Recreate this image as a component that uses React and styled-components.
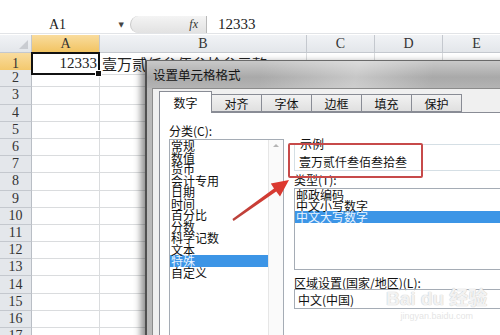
import React from 'react';
import styled, { createGlobalStyle } from 'styled-components';

const GlobalStyle = createGlobalStyle`
  html, body { margin: 0; padding: 0; background: #fff; }
`;

const CJK = `"Noto Sans CJK SC", "Liberation Sans", sans-serif`;
const SERIF = `"Liberation Serif", "DejaVu Serif", serif`;

const Screen = styled.div`
  position: relative;
  width: 500px;
  height: 335px;
  overflow: hidden;
  background: #fff;
  font-family: ${SERIF};
`;

const TopGap = styled.div`
  height: 16px;
`;

const FormulaBar = styled.div`
  display: flex;
  height: 17px;
  border-bottom: 1px solid #e2e4e7;
  font-size: 14px;
  color: #222;
`;

const NameBox = styled.div`
  width: 130px;
  display: flex;
  align-items: center;
  padding-left: 49px;
  box-sizing: border-box;
  span { flex: 1; }
  i {
    font-style: normal;
    font-family: "DejaVu Sans", sans-serif;
    font-size: 7px;
    color: #444;
    margin-right: 6px;
  }
`;

const FxZone = styled.div`
  width: 76px;
  display: flex;
  align-items: center;
  justify-content: flex-end;
  padding-right: 8px;
  box-sizing: border-box;
  border-radius: 9px 0 0 9px;
  border-left: 1px solid #c8c8c8;
  background: linear-gradient(#f4f4f4, #e2e2e2);
  font-style: italic;
  font-size: 12px;
  color: #333;
`;

const FormulaInput = styled.div`
  flex: 1;
  display: flex;
  align-items: center;
  padding-left: 11px;
  border-left: 1px solid #b9b9b9;
  font-size: 15px;
`;

const Grid = styled.div`
  margin-top: 1px;
`;

const COLS = '32px 68px 207px 68px 68px 68px';

const HeaderRow = styled.div`
  display: grid;
  grid-template-columns: ${COLS};
  height: 18px;
`;

const Row = styled.div`
  display: grid;
  grid-template-columns: ${COLS};
  height: 17.2px;
`;

const ColHead = styled.div`
  box-sizing: border-box;
  display: flex;
  align-items: center;
  justify-content: center;
  font-size: 14px;
  color: #333;
  border-right: 1px solid #c4c8ce;
  border-bottom: 1px solid ${p => (p.$active ? '#e3a43b' : '#c4c8ce')};
  background: ${p => (p.$active ? 'linear-gradient(#f9dc9e, #f2c462)' : 'linear-gradient(#f1f3f6, #e3e6ea)')};
  position: relative;
`;

const Corner = styled(ColHead)`
  &::after {
    content: '';
    position: absolute;
    right: 3px;
    bottom: 3px;
    border-left: 9px solid transparent;
    border-bottom: 9px solid #c9ccd1;
  }
`;

const RowHead = styled.div`
  box-sizing: border-box;
  display: flex;
  align-items: center;
  justify-content: center;
  font-size: 14px;
  color: #333;
  border-bottom: 1px solid #c4c8ce;
  border-right: 1px solid ${p => (p.$active ? '#e3a43b' : '#b9bec5')};
  background: ${p => (p.$active ? 'linear-gradient(#f9dc9e, #f2c462)' : '#e4e7eb')};
`;

const Cell = styled.div`
  box-sizing: border-box;
  border-right: 1px solid #dadcde;
  border-bottom: 1px solid #dadcde;
  display: flex;
  align-items: center;
  justify-content: ${p => (p.$right ? 'flex-end' : 'flex-start')};
  white-space: nowrap;
  overflow: visible;
  position: relative;
`;

const ActiveCell = styled(Cell)`
  border: 2px solid #111;
  margin: -1px 0 0 -1px;
  padding-right: 1px;
  font-size: 15px;
  color: #222;
  background: #fff;
  z-index: 1;
  &::after {
    content: '';
    position: absolute;
    right: -4px;
    bottom: -4px;
    width: 5px;
    height: 5px;
    background: #111;
    border: 1px solid #fff;
  }
`;

const Overflow = styled.span`
  font-family: ${CJK};
  font-size: 15px;
  color: #222;
  padding-left: 2px;
`;

const Dialog = styled.div`
  position: absolute;
  left: 145px;
  top: 60px;
  width: 380px;
  height: 290px;
  display: flex;
  flex-direction: column;
  border-left: 2px solid #505050;
  border-top: 1px solid #6a6a6a;
  background: linear-gradient(90deg, #b9b9b9, #d4d4d4 40%, #bfbfbf);
  box-shadow: -4px 2px 7px rgba(0, 0, 0, 0.45);
  font-family: ${CJK};
  font-size: 12px;
  color: #111;
  z-index: 2;
`;

const TitleBar = styled.div`
  height: 27px;
  display: flex;
  align-items: center;
  padding-left: 6px;
  font-size: 12.5px;
  color: #151515;
  background:
    linear-gradient(100deg, rgba(255,255,255,0) 30%, rgba(255,255,255,0.35) 55%, rgba(255,255,255,0) 75%),
    linear-gradient(#c9c9c9, #a9a9a9 60%, #b4b4b4);
`;

const Frame = styled.div`
  flex: 1;
  padding-left: 5px;
  display: flex;
`;

const Body = styled.div`
  flex: 1;
  background: #f0f0f0;
  border-left: 1px solid #8c8c8c;
  border-top: 1px solid #8c8c8c;
  padding: 1px 0 0 6px;
  display: flex;
  flex-direction: column;
`;

const Tabs = styled.div`
  display: flex;
  align-items: flex-end;
  height: 22px;
  position: relative;
  z-index: 1;
`;

const Tab = styled.div`
  box-sizing: border-box;
  width: ${p => p.$w}px;
  height: ${p => (p.$active ? 22 : 18)}px;
  margin-bottom: ${p => (p.$active ? -1 : 0)}px;
  display: flex;
  align-items: center;
  justify-content: center;
  border: 1px solid #898c95;
  border-bottom: ${p => (p.$active ? 'none' : '1px solid #898c95')};
  margin-right: -1px;
  background: ${p => (p.$active ? '#fff' : 'linear-gradient(#f2f2f2, #e0e0e0)')};
  font-size: 12px;
  padding-top: ${p => (p.$active ? 0 : 1)}px;
`;

const Panel = styled.div`
  flex: 1;
  background: #fff;
  border: 1px solid #898c95;
  border-right: none;
  display: grid;
  grid-template-columns: 115px 1fr;
  column-gap: 10px;
  padding: 12px 0 0 9px;
`;

const Column = styled.div`
  display: flex;
  flex-direction: column;
`;

const Label = styled.div`
  line-height: 12px;
  height: 12px;
  margin-top: ${p => p.$gap || 0}px;
  white-space: nowrap;
`;

const ListBox = styled.div`
  box-sizing: border-box;
  margin-top: ${p => p.$gap || 0}px;
  height: ${p => p.$h}px;
  border: 1px solid #a5acb5;
  display: flex;
  background: #fff;
  overflow: hidden;
`;

const Items = styled.div`
  flex: 1;
  padding-top: ${p => p.$pad || 0}px;
`;

const Item = styled.div`
  line-height: ${p => p.$lh}px;
  height: ${p => p.$lh}px;
  padding-left: 1px;
  white-space: nowrap;
  color: ${p => (p.$selected ? '#eaf4ff' : '#111')};
  background: ${p => (p.$selected ? '#3c95e6' : 'transparent')};
`;

const ScrollTrack = styled.div`
  width: 15px;
  border-left: 1px solid #e6e6e6;
  background: #fafafa;
  display: flex;
  justify-content: center;
  padding-top: 4px;
  box-sizing: border-box;
  &::before {
    content: '';
    width: 0;
    height: 0;
    border-left: 3px solid transparent;
    border-right: 3px solid transparent;
    border-bottom: 3px solid #b4b4b4;
  }
`;

const Sample = styled.fieldset`
  margin: 13px 0 0 0;
  padding: 0 0 0 4px;
  height: 33px;
  box-sizing: border-box;
  border: 1px solid #d5dfe5;
  border-right: none;
  min-width: 0;
  legend {
    padding: 0 1px;
    line-height: 12px;
    font-size: 12px;
  }
  div {
    line-height: 16px;
    padding-top: 4px;
  }
`;

const Combo = styled.div`
  box-sizing: border-box;
  height: 20px;
  border: 1px solid #a5acb5;
  display: flex;
  align-items: center;
  padding-left: 3px;
`;

const Callout = styled.div`
  position: absolute;
  left: 288px;
  top: 143px;
  width: 135px;
  height: 35px;
  box-sizing: border-box;
  border: 2px solid #c74a4a;
  border-radius: 2px;
  z-index: 3;
`;

const ArrowLayer = styled.svg`
  position: absolute;
  left: 0;
  top: 0;
  z-index: 4;
  pointer-events: none;
`;

const Watermark = styled.div`
  position: absolute;
  left: 386px;
  top: 288px;
  z-index: 3;
  display: flex;
  flex-direction: column;
  align-items: center;
  color: rgba(255, 255, 255, 0.8);
  text-shadow: 0 0 1px #c8c8c8, 0 0 1px #c8c8c8;
  pointer-events: none;
  b {
    font-family: "Liberation Sans", ${CJK};
    font-size: 19px;
    line-height: 22px;
  }
  small {
    font-family: "Liberation Sans", sans-serif;
    font-size: 9px;
    line-height: 12px;
    color: rgba(225, 225, 225, 0.9);
    text-shadow: none;
  }
`;

const categories = ['常规', '数值', '货币', '会计专用', '日期', '时间', '百分比', '分数', '科学记数', '文本', '特殊', '自定义'];
const types = ['邮政编码', '中文小写数字', '中文大写数字'];
const tabs = [['数字', 53], ['对齐', 51], ['字体', 51], ['边框', 51], ['填充', 51], ['保护', 51]];
const rows = Array.from({ length: 17 }, (_, i) => i + 1);

export default function App() {
  return (
    <Screen>
      <GlobalStyle />
      <TopGap />
      <FormulaBar>
        <NameBox><span>A1</span><i>▼</i></NameBox>
        <FxZone>fx</FxZone>
        <FormulaInput>12333</FormulaInput>
      </FormulaBar>
      <Grid>
        <HeaderRow>
          <Corner />
          <ColHead $active>A</ColHead>
          <ColHead>B</ColHead>
          <ColHead>C</ColHead>
          <ColHead>D</ColHead>
          <ColHead>E</ColHead>
        </HeaderRow>
        {rows.map(n => (
          <Row key={n}>
            <RowHead $active={n === 1}>{n}</RowHead>
            {n === 1 ? <ActiveCell $right>12333</ActiveCell> : <Cell />}
            <Cell>{n === 1 && <Overflow>壹万贰仟叁佰叁拾叁元整</Overflow>}</Cell>
            <Cell />
            <Cell />
            <Cell />
          </Row>
        ))}
      </Grid>

      <Dialog>
        <TitleBar>设置单元格格式</TitleBar>
        <Frame>
          <Body>
            <Tabs>
              {tabs.map(([t, w], i) => (
                <Tab key={t} $w={w} $active={i === 0}>{t}</Tab>
              ))}
            </Tabs>
            <Panel>
              <Column>
                <Label>分类(C):</Label>
                <ListBox $gap={2} $h={200}>
                  <Items>
                    {categories.map(c => (
                      <Item key={c} $lh={11.55} $selected={c === '特殊'}>{c}</Item>
                    ))}
                  </Items>
                  <ScrollTrack />
                </ListBox>
              </Column>
              <Column>
                <Sample>
                  <legend>示例</legend>
                  <div>壹万贰仟叁佰叁拾叁</div>
                </Sample>
                <Label $gap={3}>类型(T):</Label>
                <ListBox $gap={2} $h={82}>
                  <Items $pad={0}>
                    {types.map(t => (
                      <Item key={t} $lh={11.2} $selected={t === '中文大写数字'}>{t}</Item>
                    ))}
                  </Items>
                </ListBox>
                <Label $gap={7}>区域设置(国家/地区)(L):</Label>
                <Combo>中文(中国)</Combo>
              </Column>
            </Panel>
          </Body>
        </Frame>
      </Dialog>

      <Callout />
      <ArrowLayer width="500" height="335" viewBox="0 0 500 335">
        <defs>
          <linearGradient id="arw" x1="0" y1="1" x2="1" y2="0">
            <stop offset="0" stopColor="#b8423c" />
            <stop offset="1" stopColor="#e2372e" />
          </linearGradient>
        </defs>
        <polygon
          fill="url(#arw)"
          points="233.6,221.0 276.2,191.4 280.0,196.6 289,180 270.8,183.6 274.0,188.4 232.4,219.0"
        />
      </ArrowLayer>

      <Watermark>
        <b>Bai du 经验</b>
        <small>jingyan.baidu.com</small>
      </Watermark>
    </Screen>
  );
}
